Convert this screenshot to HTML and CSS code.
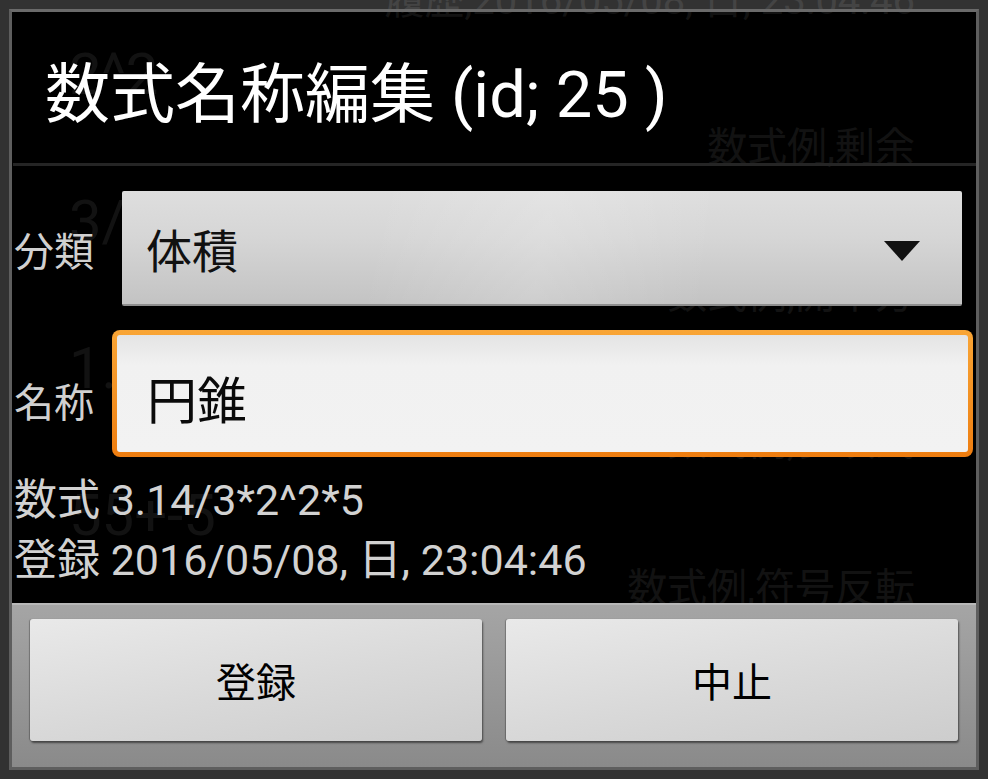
FILE: index.html
```html
<!DOCTYPE html>
<html lang="ja">
<head>
<meta charset="utf-8">
<title>数式名称編集</title>
<link rel="stylesheet" href="styles.css">
</head>
<body>
<div class="app">
  <div class="app-row first"><div class="formula"></div><div class="caption">履歴,2016/05/08, 日, 23:04:46</div></div>
  <div class="app-row"><div class="formula">2^2</div><div class="caption">数式例,剰余</div></div>
  <div class="app-row"><div class="formula">3/</div><div class="caption">数式例,開平方</div></div>
  <div class="app-row"><div class="formula">1.2^</div><div class="caption">数式例,多項式</div></div>
  <div class="app-row"><div class="formula">55+-5</div><div class="caption">数式例,符号反転</div></div>
</div>

<div class="dialog">
  <div class="title">数式名称編集 (id; 25 )</div>
  <div class="divider"></div>
  <div class="content">
    <div class="row row-spinner">
      <div class="label">分類</div>
      <div class="spinner">
        <span class="spinner-text">体積</span>
        <svg class="caret" width="36" height="20" viewBox="0 0 36 20"><polygon points="0,0 36,0 18,20" fill="#111"/></svg>
      </div>
    </div>
    <div class="row row-edit">
      <div class="label label-edit">名称</div>
      <div class="edit"><div class="edit-inner">円錐</div></div>
    </div>
    <div class="info">
      <div class="info-line">数式 3.14/3*2^2*5</div>
      <div class="info-line">登録 2016/05/08, 日, 23:04:46</div>
    </div>
  </div>
  <div class="buttons">
    <div class="btn">登録</div>
    <div class="btn">中止</div>
  </div>
</div>
</body>
</html>
```

FILE: styles.css
```css
html, body {
  margin: 0;
  padding: 0;
}
body {
  width: 988px;
  height: 779px;
  overflow: hidden;
  position: relative;
  background: #000;
  font-family: "Roboto", "Noto Sans CJK JP", sans-serif;
}

/* underlying app (dimmed behind dialog) */
.app {
  display: flex;
  flex-direction: column;
}
.app-row {
  height: 147px;
  display: flex;
  flex-direction: column;
  flex-shrink: 0;
}
.app-row.first {
  margin-top: -110px;
}
.formula {
  height: 74px;
  line-height: 74px;
  font-size: 58px;
  color: #808080;
  padding-left: 69px;
}
.caption {
  height: 73px;
  line-height: 73px;
  font-size: 40px;
  color: #808080;
  text-align: right;
  padding-right: 73px;
}

/* dialog */
.dialog {
  position: absolute;
  left: 9px;
  top: 9px;
  width: 964px;
  height: 755px;
  border: 3px solid #5e5e5e;
  border-top-color: #6a6a6a;
  background: rgba(0, 0, 0, 0.86);
  box-shadow: 0 0 0 10px rgba(58, 58, 58, 0.86);
  display: flex;
  flex-direction: column;
}
.title {
  height: 151px;
  line-height: 151px;
  padding-top: 8px;
  box-sizing: border-box;
  padding-left: 33px;
  font-size: 65px;
  color: #ffffff;
  white-space: nowrap;
}
.divider {
  height: 3px;
  margin-left: 1px;
  background: #252525;
}
.content {
  flex: 1;
  display: flex;
  flex-direction: column;
  padding-left: 2px;
}
.row {
  display: flex;
  align-items: center;
}
.row-spinner {
  margin-top: 24px;
  height: 117px;
}
.row-edit {
  margin-top: 23px;
  height: 127px;
}
.label {
  width: 98px;
  flex-shrink: 0;
  font-size: 40px;
  color: #d0d0d0;
}
.label-edit {
  padding-top: 12px;
}
.spinner {
  flex: 1;
  height: 115px;
  margin-left: 10px;
  margin-right: 14px;
  border-radius: 2px;
  border-bottom: 2px solid #8e8e8e;
  background:
    linear-gradient(100deg, rgba(255,255,255,0) 30%, rgba(255,255,255,0.18) 50%, rgba(255,255,255,0) 70%),
    linear-gradient(#dedede, #d6d6d6 40%, #c3c3c3);
  display: flex;
  align-items: center;
  justify-content: space-between;
  padding-left: 24px;
  padding-right: 42px;
  box-sizing: border-box;
}
.spinner-text {
  font-size: 46px;
  color: #111;
}
.caret {
  display: block;
  margin-top: 6px;
}
.edit {
  flex: 1;
  height: 127px;
  margin-right: 3px;
  padding: 5px;
  box-sizing: border-box;
  border-radius: 8px;
  background: linear-gradient(#f9a535, #f39224 50%, #ee7d10);
}
.edit-inner {
  height: 100%;
  border-radius: 3px;
  background: linear-gradient(#e4e4e4, #f1f1f1 30px, #f2f2f2);
  display: flex;
  align-items: center;
  padding-left: 30px;
  padding-top: 6px;
  box-sizing: border-box;
  font-size: 50px;
  color: #0a0a0a;
}
.info {
  margin-top: 13px;
  display: flex;
  flex-direction: column;
}
.info-line {
  height: 60px;
  line-height: 60px;
  font-size: 43px;
  color: #d2d2d2;
  white-space: nowrap;
}
.buttons {
  height: 164px;
  box-sizing: border-box;
  border-top: 2px solid #b8b8b8;
  background: linear-gradient(#a5a5a5, #8a8a8a);
  display: flex;
  gap: 24px;
  padding: 14px 18px 0 18px;
  align-items: flex-start;
}
.btn {
  flex: 1;
  height: 122px;
  border-radius: 3px;
  background: linear-gradient(170deg, #e9e9e9, #d9d9d9 55%, #cdcdcd);
  box-shadow: 1px 2px 2px rgba(0, 0, 0, 0.5), -1px 0 1px rgba(0, 0, 0, 0.25);
  display: flex;
  align-items: center;
  justify-content: center;
  font-size: 40px;
  color: #000;
}
```
